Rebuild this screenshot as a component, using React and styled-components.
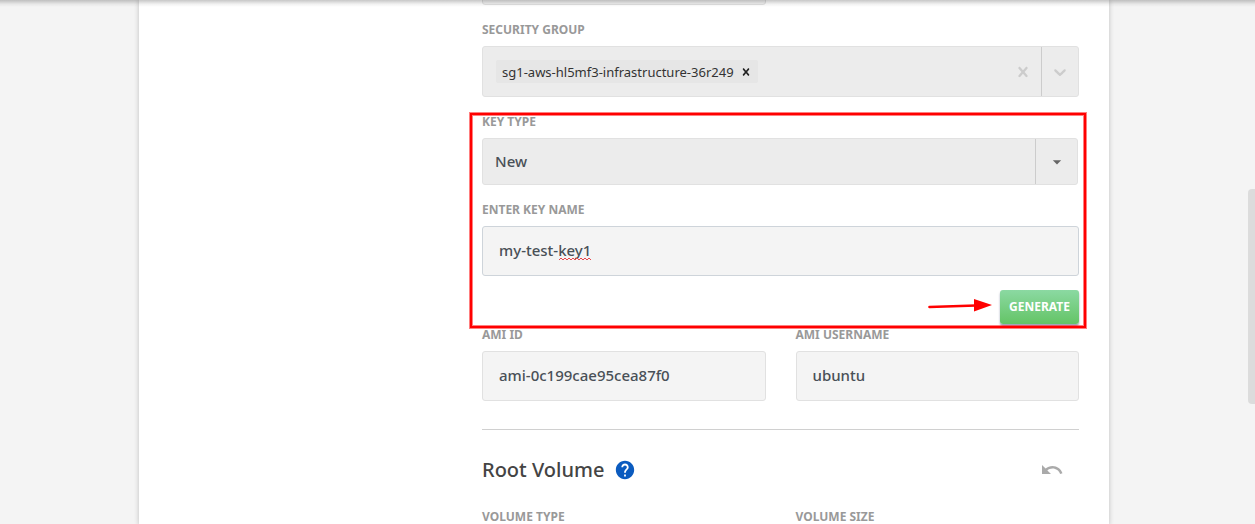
import React from "react";
import styled, { createGlobalStyle } from "styled-components";
import { MdHelp, MdUndo, MdArrowDropDown } from "react-icons/md";

const GlobalStyle = createGlobalStyle`
  *, *::before, *::after { box-sizing: border-box; }
  body {
    margin: 0;
    background: #f4f4f4;
    font-family: "Noto Sans", "Open Sans", sans-serif;
    color: #444;
  }
  input, select, button { font-family: inherit; }
`;

const Page = styled.div`
  position: relative;
  display: flex;
  min-height: 100vh;
  overflow: hidden;
`;

const TopShadow = styled.div`
  position: absolute;
  inset: 0 0 auto;
  height: 7px;
  background: linear-gradient(rgba(0, 0, 0, 0.22), rgba(0, 0, 0, 0.05) 60%, transparent);
  pointer-events: none;
`;

const Content = styled.main`
  flex: 1;
  display: flex;
  justify-content: center;
`;

const Card = styled.div`
  display: flex;
  justify-content: flex-end;
  width: 100%;
  max-width: 970px;
  padding: 0 30px;
  background: #fff;
  box-shadow: 0 0 5px rgba(0, 0, 0, 0.22);
`;

const Form = styled.form`
  display: flex;
  flex-direction: column;
  width: 100%;
  max-width: 597px;
`;

const ScrollTrack = styled.div`
  display: grid;
  grid-template-rows: 189fr 214fr 121fr;
  width: 7px;
`;

const ScrollThumb = styled.div`
  grid-row: 2;
  border-radius: 4px 0 0 4px;
  background: #dcdcdc;
`;

const Columns = styled.div`
  display: grid;
  grid-template-columns: 1fr 1fr;
  column-gap: 30px;
`;

const Field = styled.div`
  display: flex;
  flex-direction: column;
  gap: 8px;
  min-width: 0;
  margin-bottom: ${(p) => p.$space || 0}px;
`;

const Label = styled.label`
  align-self: flex-start;
  font-size: 12px;
  line-height: 16px;
  font-weight: 700;
  color: #999;
  text-transform: uppercase;
`;

const InputWrap = styled.div`
  position: relative;
  display: flex;
`;

const TextInput = styled.input`
  width: 100%;
  height: 50px;
  padding: 0 16px 2px;
  border: 1px solid ${(p) => (p.$active ? "#ced4da" : "#e1e1e1")};
  border-radius: 3px;
  background: #f4f4f4;
  color: #495057;
  font-size: 15px;
  font-weight: 500;
  outline: none;
`;

const Squiggle = styled.svg`
  position: absolute;
  left: 77px;
  top: 31px;
  width: 32px;
  height: 4px;
  pointer-events: none;
`;

const ScrolledField = styled.div`
  display: flex;
  align-items: flex-end;
  height: 5px;
  margin-bottom: 17px;
  overflow: hidden;
`;

const MultiSelect = styled.div`
  display: flex;
  align-items: center;
  height: 51px;
  padding-left: 13px;
  border: 1px solid #e1e1e1;
  border-radius: 3px;
  background: #ececec;
`;

const Chip = styled.span`
  display: flex;
  align-items: center;
  height: 23px;
  padding-left: 6px;
  border-radius: 2px;
  background: #e6e6e6;
  color: #333;
  font-size: 13px;
  white-space: nowrap;
`;

const IconButton = styled.button`
  display: flex;
  align-items: center;
  justify-content: center;
  width: ${(p) => p.$width}px;
  height: ${(p) => p.$height || "auto"};
  padding: 0;
  border: 0;
  border-left: ${(p) => (p.$divided ? "1px solid #ccc" : "0")};
  background: none;
  color: ${(p) => p.$color};
`;

const ChipSearch = styled.input`
  flex: 1;
  min-width: 0;
  border: 0;
  background: none;
  outline: none;
  font-size: 13px;
`;

const SelectBox = styled.div`
  display: flex;
  height: 47px;
  margin-right: 1px;
  border: 1px solid #e1e1e1;
  border-radius: 3px;
  background: #ececec;
`;

const Select = styled.select`
  appearance: none;
  flex: 1;
  min-width: 0;
  padding: 0 12px 2px;
  border: 0;
  background: none;
  color: #495057;
  font-size: 15px;
  font-weight: 500;
  outline: none;
`;

const Caret = styled.span`
  display: flex;
  align-items: center;
  justify-content: center;
  width: 42px;
  border-left: 1px solid #ccc;
  color: #666;
  pointer-events: none;
`;

const KeySection = styled.section`
  position: relative;
  margin: 17px 0 3px;
`;

const Highlight = styled.div`
  position: absolute;
  inset: -1px -7px -4px -12px;
  border: 2px solid #f00;
  box-shadow: 0 0 0 1px rgba(255, 0, 0, 0.5), inset 0 0 0 1px rgba(255, 0, 0, 0.5);
  pointer-events: none;
`;

const Actions = styled.div`
  display: flex;
  align-items: center;
  justify-content: flex-end;
  gap: 8px;
`;

const GenerateButton = styled.button`
  width: 79px;
  height: 34px;
  padding: 0 0 2px;
  border: 0;
  border-radius: 3px;
  background: linear-gradient(#8bd9a2, #64c466);
  box-shadow: 0 2px 2px rgba(60, 70, 110, 0.5);
  color: #fff;
  font-size: 12px;
  font-weight: 700;
`;

const Divider = styled.hr`
  width: 100%;
  height: 1px;
  margin: 28px 0 0;
  border: 0;
  background: #d0d0d0;
`;

const SectionHeader = styled.header`
  display: flex;
  align-items: center;
  height: 79px;
  padding-right: 15px;
`;

const Title = styled.h2`
  flex: 1;
  display: flex;
  align-items: center;
  gap: 10px;
  margin: 0;
  font-size: 20px;
  font-weight: 500;
  line-height: 28px;
`;

const Cross = ({ size }) => (
  <svg width={size} height={size} viewBox="0 0 20 20" fill="currentColor" aria-hidden="true">
    <path d="M14.348 14.849c-0.469 0.469-1.229 0.469-1.697 0l-2.651-3.030-2.651 3.029c-0.469 0.469-1.229 0.469-1.697 0-0.469-0.469-0.469-1.229 0-1.697l2.758-3.15-2.759-3.152c-0.469-0.469-0.469-1.228 0-1.697s1.228-0.469 1.697 0l2.652 3.031 2.651-3.031c0.469-0.469 1.228-0.469 1.697 0s0.469 1.229 0 1.697l-2.758 3.152 2.758 3.15c0.469 0.469 0.469 1.229 0 1.698z" />
  </svg>
);

const Chevron = () => (
  <svg width="20" height="20" viewBox="0 0 20 20" fill="currentColor" aria-hidden="true">
    <path d="M4.516 7.548c0.436-0.446 1.043-0.481 1.576 0l3.908 3.747 3.908-3.747c0.533-0.481 1.141-0.446 1.574 0 0.436 0.445 0.408 1.197 0 1.615-0.406 0.418-4.695 4.502-4.695 4.502-0.217 0.223-0.502 0.335-0.787 0.335s-0.57-0.112-0.789-0.335c0 0-4.287-4.084-4.695-4.502s-0.436-1.17 0-1.615z" />
  </svg>
);

const Arrow = () => (
  <svg width="64" height="16" viewBox="0 0 64 16" aria-hidden="true">
    <path d="M1.500 8 L48 6.500" stroke="#f00" strokeWidth="2.600" strokeLinecap="round" />
    <path d="M46 0 L64 6 L46 12.500 Z" fill="#f00" />
  </svg>
);

export default function App() {
  return (
    <>
      <GlobalStyle />
      <Page>
        <Content>
          <Card>
            <Form onSubmit={(e) => e.preventDefault()}>
              <Columns>
                <ScrolledField>
                  <TextInput aria-label="Instance type" />
                </ScrolledField>
              </Columns>

              <Field>
                <Label htmlFor="security-group">Security group</Label>
                <MultiSelect>
                  <Chip>
                    sg1-aws-hl5mf3-infrastructure-36r249
                    <IconButton type="button" $width={24} $height="23px" $color="#222" aria-label="Remove security group">
                      <Cross size={14} />
                    </IconButton>
                  </Chip>
                  <ChipSearch id="security-group" />
                  <IconButton type="button" $width={36} $height="100%" $color="#ccc" aria-label="Clear">
                    <Cross size={20} />
                  </IconButton>
                  <IconButton type="button" $width={37} $height="100%" $color="#ccc" $divided aria-label="Open">
                    <Chevron />
                  </IconButton>
                </MultiSelect>
              </Field>

              <KeySection>
                <Field $space={17}>
                  <Label htmlFor="key-type">Key type</Label>
                  <SelectBox>
                    <Select id="key-type" defaultValue="New">
                      <option>New</option>
                    </Select>
                    <Caret>
                      <MdArrowDropDown size={20} />
                    </Caret>
                  </SelectBox>
                </Field>
                <Field $space={14}>
                  <Label htmlFor="key-name">Enter key name</Label>
                  <InputWrap>
                    <TextInput id="key-name" defaultValue="my-test-key1" spellCheck={false} $active />
                    <Squiggle viewBox="0 0 32 4" aria-hidden="true">
                      <path
                        d="M0 3 L2 1 L4 3 L6 1 L8 3 L10 1 L12 3 L14 1 L16 3 L18 1 L20 3 L22 1 L24 3 L26 1 L28 3 L30 1 L32 3"
                        fill="none"
                        stroke="#e8474c"
                      />
                    </Squiggle>
                  </InputWrap>
                </Field>
                <Actions>
                  <Arrow />
                  <GenerateButton type="button">GENERATE</GenerateButton>
                </Actions>
                <Highlight />
              </KeySection>

              <Columns>
                <Field>
                  <Label htmlFor="ami-id">AMI ID</Label>
                  <TextInput id="ami-id" defaultValue="ami-0c199cae95cea87f0" />
                </Field>
                <Field>
                  <Label htmlFor="ami-username">AMI username</Label>
                  <TextInput id="ami-username" defaultValue="ubuntu" />
                </Field>
              </Columns>

              <Divider />
              <SectionHeader>
                <Title>
                  Root Volume
                  <MdHelp size={22} color="#0b5bbf" />
                </Title>
                <IconButton type="button" $width={24} $color="#aaa" aria-label="Reset root volume">
                  <MdUndo size={24} />
                </IconButton>
              </SectionHeader>

              <Columns>
                <Label as="span">Volume type</Label>
                <Label as="span">Volume size</Label>
              </Columns>
            </Form>
          </Card>
        </Content>
        <ScrollTrack>
          <ScrollThumb />
        </ScrollTrack>
        <TopShadow />
      </Page>
    </>
  );
}
